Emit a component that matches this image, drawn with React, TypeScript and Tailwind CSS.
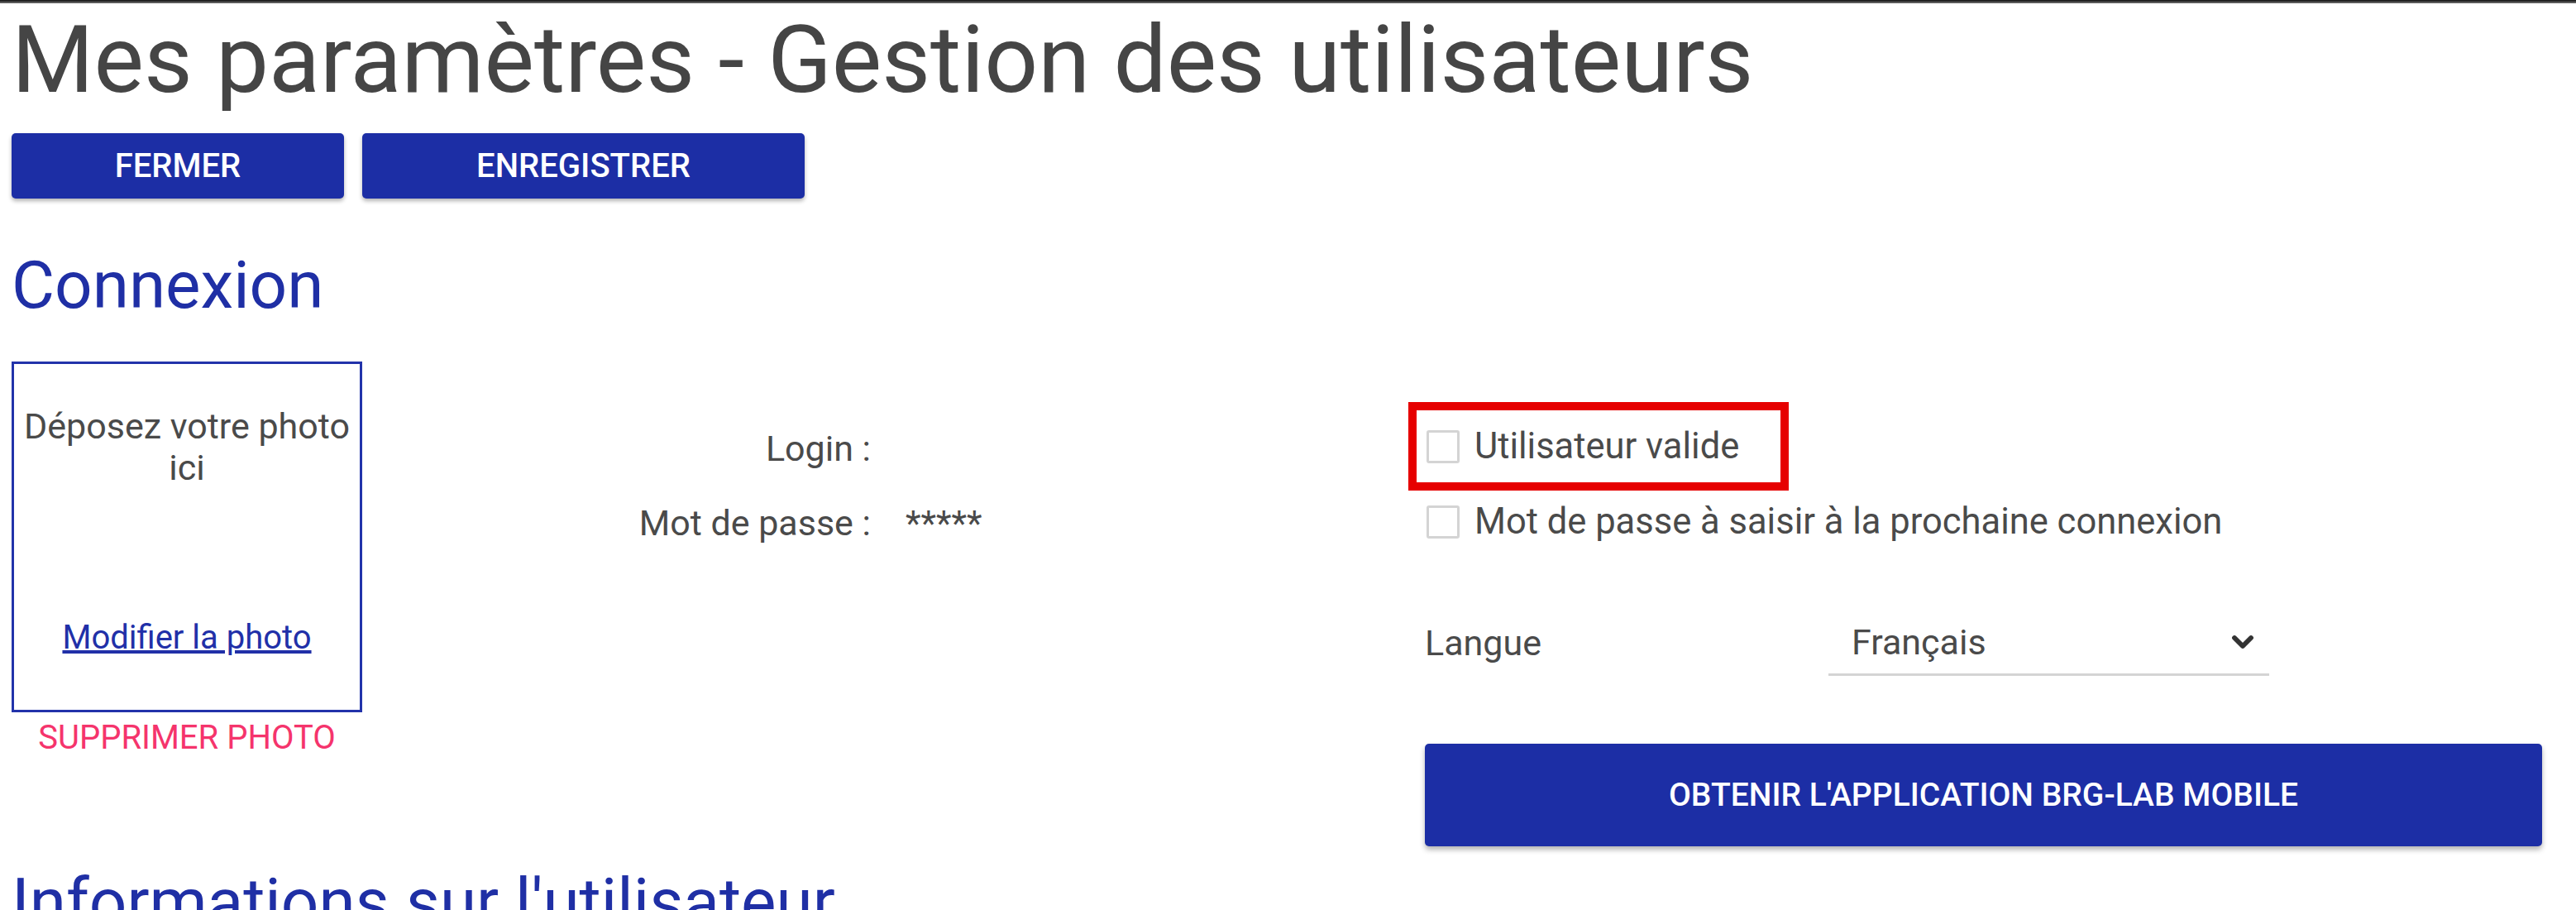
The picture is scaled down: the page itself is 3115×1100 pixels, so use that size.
import { ChevronDown } from 'lucide-react';

const font = { fontFamily: 'Roboto, "Noto Sans", Arial, sans-serif' };

function Checkbox({ label }: { label: string }) {
  return (
    <label className="flex h-[50px] items-center">
      <span className="ml-[2px] h-[40px] w-[40px] shrink-0 rounded-[3px] border-[3px] border-[#d4d4d4] bg-white" />
      <span className="ml-[18px] text-[43.5px] leading-[50px] text-[#4a4a4a]">{label}</span>
    </label>
  );
}

export default function App() {
  return (
    <div className="min-h-[1100px] w-[3115px] overflow-hidden bg-white" style={font}>
      <div className="h-[4px] bg-gradient-to-b from-[#111] to-[#777]" />

      <div className="pl-[14px]">
        <h1 className="mt-[1px] text-[114px] font-normal leading-[134px] text-[#454545]">
          Mes paramètres - Gestion des utilisateurs
        </h1>

        <div className="mt-[22px] flex gap-[22px]">
          <button className="h-[79px] w-[402px] rounded-[5px] bg-[#1c2ea5] text-[40px] font-medium text-white shadow-[0_3px_5px_rgba(0,0,0,0.3)]">
            FERMER
          </button>
          <button className="h-[79px] w-[535px] rounded-[5px] bg-[#1c2ea5] text-[40px] font-medium text-white shadow-[0_3px_5px_rgba(0,0,0,0.3)]">
            ENREGISTRER
          </button>
        </div>

        <h2 className="mt-[57px] text-[80px] font-normal leading-[96px] text-[#1f2fa5]">Connexion</h2>

        <div className="mt-[44px] grid grid-cols-[424px_1285px_1351px]">
          {/* photo */}
          <div className="flex flex-col items-center">
            <div className="flex h-[424px] w-[424px] flex-col items-center justify-between border-[3px] border-[#2233aa] pb-[63px] pt-[50px] text-center">
              <p className="px-[6px] text-[43px] leading-[50px] text-[#4a4a4a]">Déposez votre photo ici</p>
              <a href="#" className="text-[40px] leading-[48px] text-[#2130a8] underline">
                Modifier la photo
              </a>
            </div>
            <span className="mt-[8px] text-[40px] leading-[46px] text-[#f5346c]">SUPPRIMER PHOTO</span>
          </div>

          {/* login */}
          <div className="grid grid-cols-[615px_1fr] content-start gap-x-[42px] gap-y-[40px] pt-[80px] text-[43px] leading-[50px] text-[#4a4a4a]">
            <span className="text-right">Login :</span>
            <span />
            <span className="text-right">Mot de passe :</span>
            <span>*****</span>
          </div>

          {/* options */}
          <div className="flex flex-col pt-[78px]">
            <div className="relative">
              <Checkbox label="Utilisateur valide" />
              <div className="pointer-events-none absolute left-[-20px] top-[-29px] h-[107px] w-[460px] border-[10px] border-[#e60000]" />
            </div>
            <div className="mt-[41px]">
              <Checkbox label="Mot de passe à saisir à la prochaine connexion" />
            </div>

            <div className="mt-[81px] flex items-center">
              <span className="w-[488px] text-[43px] leading-[50px] text-[#4a4a4a]">Langue</span>
              <div className="flex h-[80px] w-[533px] items-center justify-between border-b-[3px] border-[#d4d4d4] pl-[28px] pr-[12px]">
                <span className="text-[43px] leading-[50px] text-[#4a4a4a]">Français</span>
                <ChevronDown className="h-[40px] w-[40px] text-[#333]" strokeWidth={3.5} />
              </div>
            </div>

            <button className="mt-[82px] h-[124px] w-[1351px] rounded-[5px] bg-[#1c2ea5] text-[39px] font-medium text-white shadow-[0_4px_6px_rgba(0,0,0,0.3)]">
              OBTENIR L'APPLICATION BRG-LAB MOBILE
            </button>
          </div>
        </div>

        <h2 className="mt-[20px] text-[80px] font-normal leading-[96px] text-[#1f2fa5]">Informations sur l'utilisateur</h2>
      </div>
    </div>
  );
}
